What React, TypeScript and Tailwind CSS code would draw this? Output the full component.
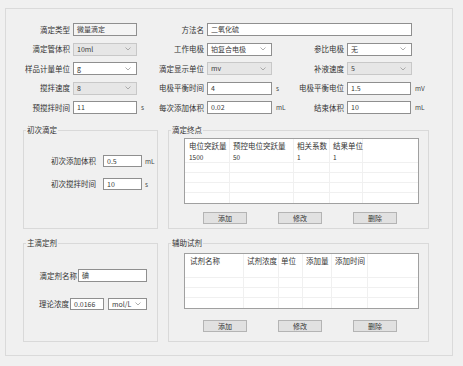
import type { ReactNode } from 'react';

type Tone = 'white' | 'gray' | 'readonly';

function Chevron() {
  return (
    <svg width="6" height="4" viewBox="0 0 6 4" className="shrink-0">
      <polyline points="0.5,0.5 3,3 5.5,0.5" fill="none" stroke="#9a9a9a" strokeWidth="0.8" />
    </svg>
  );
}

function Input({ w, h = 'h-[13px]', value, tone = 'white' }: { w: string; h?: string; value: string; tone?: Tone }) {
  const toneCls =
    tone === 'readonly' ? 'bg-[#f4f4f4] border-[#8f8f8f]' : 'bg-white border-[#8f8f8f]';
  return (
    <div className={`${w} ${h} ${toneCls} border flex items-center px-[3px] text-[7px] text-[#3a3a3a]`}>
      {value}
    </div>
  );
}

function Select({ w, h = 'h-[13px]', value, tone = 'white' }: { w: string; h?: string; value: string; tone?: Tone }) {
  const toneCls = tone === 'gray' ? 'bg-[#e6e6e6] border-[#c8c8c8]' : 'bg-white border-[#8f8f8f]';
  return (
    <div className={`${w} ${h} ${toneCls} border flex items-center justify-between pl-[3px] pr-[5px] text-[7px] text-[#3a3a3a]`}>
      <span>{value}</span>
      <Chevron />
    </div>
  );
}

function Label({ w, children }: { w: string; children?: ReactNode }) {
  return <div className={`${w} shrink-0 text-right pr-[3px] text-[7.5px] text-[#333] whitespace-nowrap`}>{children}</div>;
}

function Unit({ children }: { children?: ReactNode }) {
  return <div className="w-[12px] shrink-0 pl-[4px] text-[6.5px] text-[#444]">{children}</div>;
}

function Group({ title, children }: { title: string; children: ReactNode }) {
  return (
    <fieldset className="h-[104px] border border-[#d9d9d9] min-w-0">
      <legend className="ml-[2px] px-[1px] text-[7.5px] leading-[10px] text-[#333]">{title}</legend>
      {children}
    </fieldset>
  );
}

function Buttons() {
  return (
    <div className="flex gap-[31px] ml-[34px]">
      {['添加', '修改', '删除'].map((b) => (
        <div
          key={b}
          className="w-[44px] h-[12px] bg-[#e1e1e1] border border-[#b4b4b4] flex items-center justify-center text-[7px] text-[#333]"
        >
          {b}
        </div>
      ))}
    </div>
  );
}

function Grid({
  cols,
  headers,
  pads,
  rows,
  data,
}: {
  cols: string;
  headers: string[];
  pads: string[];
  rows: number;
  data?: string[];
}) {
  const n = headers.length + 1;
  return (
    <div className="w-[235px] bg-white border border-[#a0a0a0] ml-[15px]">
      <div className={`grid ${cols} h-[14px]`}>
        {Array.from({ length: n }).map((_, i) => (
          <div
            key={i}
            className={`${pads[i] ?? ''} flex items-center text-[7.5px] text-[#333] whitespace-nowrap ${i < n - 1 ? 'border-r border-[#f0f0f0]' : ''}`}
          >
            {headers[i] ?? ''}
          </div>
        ))}
      </div>
      {Array.from({ length: rows }).map((_, r) => (
        <div key={r} className={`grid ${cols} h-[10px] ${r < rows - 1 ? 'border-b border-[#f0f0f0]' : ''}`}>
          {Array.from({ length: n }).map((_, i) => (
            <div
              key={i}
              className={`${pads[i] ?? ''} flex items-center text-[6.5px] text-[#333] ${i < n - 1 ? 'border-r border-[#f0f0f0]' : ''}`}
            >
              {r === 0 && data ? data[i] ?? '' : ''}
            </div>
          ))}
        </div>
      ))}
    </div>
  );
}

export default function App() {
  return (
    <div className="w-[463px] h-[366px] bg-[#f0f0f0] pt-[8px] pl-[5px] font-['Noto_Sans_CJK_SC','Noto_Sans',sans-serif] leading-none overflow-hidden">
      <div className="w-[448px] h-[348px] border border-[#dadada] pt-[14px]">
        {/* top form */}
        <div className="flex flex-col gap-[6.5px]">
          <div className="flex items-center h-[13px]">
            <Label w="w-[67px]">滴定类型</Label>
            <Input w="w-[64px]" value="微量滴定" tone="readonly" />
            <Unit />
            <Label w="w-[58px]">方法名</Label>
            <Input w="w-[205px]" value="二氧化硫" />
          </div>
          <div className="flex items-center h-[13px]">
            <Label w="w-[67px]">滴定管体积</Label>
            <Select w="w-[64px]" value="10ml" tone="gray" />
            <Unit />
            <Label w="w-[58px]">工作电极</Label>
            <Select w="w-[65px]" value="铂复合电极" />
            <Unit />
            <Label w="w-[63px]">参比电极</Label>
            <Select w="w-[65px]" value="无" />
          </div>
          <div className="flex items-center h-[13px]">
            <Label w="w-[67px]">样品计量单位</Label>
            <Select w="w-[64px]" value="g" />
            <Unit />
            <Label w="w-[58px]">滴定显示单位</Label>
            <Select w="w-[65px]" value="mv" tone="gray" />
            <Unit />
            <Label w="w-[63px]">补液速度</Label>
            <Select w="w-[65px]" value="5" tone="gray" />
          </div>
          <div className="flex items-center h-[13px]">
            <Label w="w-[67px]">搅拌速度</Label>
            <Select w="w-[64px]" value="8" tone="gray" />
            <Unit />
            <Label w="w-[58px]">电极平衡时间</Label>
            <Input w="w-[65px]" value="4" />
            <Unit>s</Unit>
            <Label w="w-[63px]">电极平衡电位</Label>
            <Input w="w-[64px]" value="1.5" />
            <Unit>mV</Unit>
          </div>
          <div className="flex items-center h-[13px]">
            <Label w="w-[67px]">预搅拌时间</Label>
            <Input w="w-[64px]" value="11" />
            <Unit>s</Unit>
            <Label w="w-[58px]">每次添加体积</Label>
            <Input w="w-[65px]" value="0.02" />
            <Unit>mL</Unit>
            <Label w="w-[63px]">结束体积</Label>
            <Input w="w-[64px]" value="10" />
            <Unit>mL</Unit>
          </div>
        </div>

        {/* groups */}
        <div className="flex gap-[10px] ml-[17px] mt-[11px]">
          <div className="w-[135px] flex flex-col gap-[9px]">
            <Group title="初次滴定">
              <div className="flex flex-col gap-[11px] mt-[20px]">
                <div className="flex items-center">
                  <Label w="w-[75px]">初次添加体积</Label>
                  <div className="w-[4px]" />
                  <Input w="w-[39px]" h="h-[12px]" value="0.5" />
                  <div className="pl-[3px] text-[6.5px] text-[#444]">mL</div>
                </div>
                <div className="flex items-center">
                  <Label w="w-[75px]">初次搅拌时间</Label>
                  <div className="w-[4px]" />
                  <Input w="w-[39px]" h="h-[12px]" value="10" />
                  <div className="pl-[3px] text-[6.5px] text-[#444]">s</div>
                </div>
              </div>
            </Group>
            <Group title="主滴定剂">
              <div className="flex flex-col gap-[16px] mt-[21px]">
                <div className="flex items-center">
                  <div className="w-[54px] text-right pr-[1px] text-[7.5px] text-[#333]">滴定剂名称</div>
                  <Input w="w-[69px]" value="碘" />
                </div>
                <div className="flex items-center">
                  <div className="w-[46px] text-right pr-[1px] text-[7.5px] text-[#333]">理论浓度</div>
                  <Input w="w-[34px]" h="h-[12px]" value="0.0166" />
                  <div className="w-[4px]" />
                  <Select w="w-[39px]" h="h-[12px]" value="mol/L" />
                </div>
              </div>
            </Group>
          </div>
          <div className="w-[261px] flex flex-col gap-[9px]">
            <Group title="滴定终点">
              <div className="mt-[3px]">
                <Grid
                  cols="grid-cols-[45px_64px_36px_33px_1fr]"
                  headers={['电位突跃量', '预控电位突跃量', '相关系数', '结果单位']}
                  pads={['pl-[4px]', 'pl-[3px]', 'pl-[3px]', 'pl-[3px]', '']}
                  rows={5}
                  data={['1500', '50', '1', '1', '']}
                />
              </div>
              <div className="mt-[8px]">
                <Buttons />
              </div>
            </Group>
            <Group title="辅助试剂">
              <div className="mt-[5px]">
                <Grid
                  cols="grid-cols-[59px_35px_24px_29px_36px_1fr]"
                  headers={['试剂名称', '试剂浓度', '单位', '添加量', '添加时间']}
                  pads={['pl-[5px]', 'pl-[3px]', 'pl-[2px]', 'pl-[3px]', 'pl-[3px]', '']}
                  rows={4}
                />
              </div>
              <div className="mt-[11px]">
                <Buttons />
              </div>
            </Group>
          </div>
        </div>
      </div>
    </div>
  );
}
